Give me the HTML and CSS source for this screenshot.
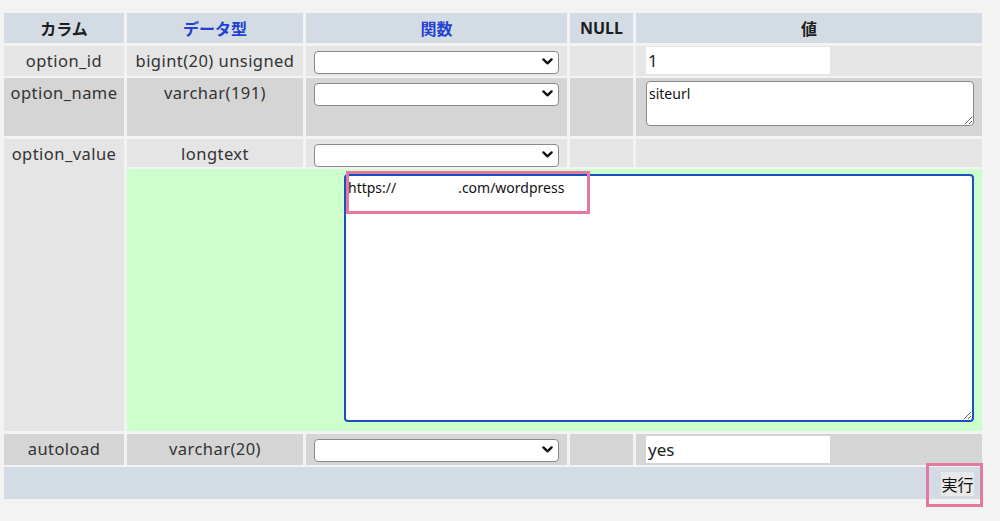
FILE: index.html
```html
<!DOCTYPE html>
<html lang="ja">
<head>
<meta charset="utf-8">
<title>編集</title>
<link rel="stylesheet" href="styles.css">
</head>
<body>
<form class="grid">
  <div class="th">カラム</div>
  <div class="th link">データ型</div>
  <div class="th link">関数</div>
  <div class="th">NULL</div>
  <div class="th">値</div>

  <div class="td odd txt">option_id</div>
  <div class="td odd txt">bigint(20) unsigned</div>
  <div class="td odd fn"><div class="sel"><select></select><svg viewBox="0 0 11 7"><path d="M1.4 1.4 L5.5 5.4 L9.6 1.4"/></svg></div></div>
  <div class="td odd"></div>
  <div class="td odd val mid"><input class="inp" type="text" value="1"></div>

  <div class="td even txt">option_name</div>
  <div class="td even txt">varchar(191)</div>
  <div class="td even fn"><div class="sel"><select></select><svg viewBox="0 0 11 7"><path d="M1.4 1.4 L5.5 5.4 L9.6 1.4"/></svg></div></div>
  <div class="td even"></div>
  <div class="td even val top"><textarea class="small">siteurl</textarea></div>

  <div class="td odd txt span2">option_value</div>
  <div class="td odd txt">longtext</div>
  <div class="td odd fn"><div class="sel"><select></select><svg viewBox="0 0 11 7"><path d="M1.4 1.4 L5.5 5.4 L9.6 1.4"/></svg></div></div>
  <div class="td odd"></div>
  <div class="td odd"></div>

  <div class="green">
    <textarea class="big">https://                 .com/wordpress</textarea>
    <div class="mark mark-url"></div>
  </div>

  <div class="td even txt">autoload</div>
  <div class="td even txt">varchar(20)</div>
  <div class="td even fn"><div class="sel"><select></select><svg viewBox="0 0 11 7"><path d="M1.4 1.4 L5.5 5.4 L9.6 1.4"/></svg></div></div>
  <div class="td even"></div>
  <div class="td even val mid"><input class="inp" type="text" value="yes"></div>

  <div class="foot">
    <button type="button" class="go">実行</button>
    <div class="mark mark-go"></div>
  </div>
</form>
</body>
</html>
```

FILE: styles.css
```css
* { box-sizing: border-box; }

html, body { overflow: visible; }

body {
  margin: 0;
  background: #f3f3f3;
  font-family: "Noto Sans", "Noto Sans CJK JP", sans-serif;
  color: #333;
}

.grid {
  display: grid;
  grid-template-columns: 120px 176px 261px 63px 346px;
  grid-template-rows: 30px 30px 58px 28px 262px 31px 32px;
  column-gap: 3px;
  row-gap: 2.5px;
  margin: 13px 0 0 4px;
  padding-bottom: 12px;
  width: 978px;
}

.th {
  background: #d3dce4;
  display: flex;
  align-items: center;
  justify-content: center;
  font-weight: bold;
  font-size: 16px;
  color: #1e1e1e;
}

.th.link { color: #2340d2; }

.td { min-width: 0; }
.odd { background: #e5e5e5; }
.even { background: #d5d5d5; }

.txt {
  text-align: center;
  font-size: 16.5px;
  letter-spacing: 0.45px;
  line-height: 29px;
  white-space: nowrap;
}

.span2 { grid-row: span 2; }

.fn { padding: 4px 0 0 8px; }

.sel {
  position: relative;
  width: 245px;
  height: 23px;
}

.sel select {
  appearance: none;
  -webkit-appearance: none;
  width: 100%;
  height: 100%;
  background: #fff;
  border: 1px solid #8a8a8a;
  border-radius: 4px;
  margin: 0;
}

.sel svg {
  position: absolute;
  right: 6px;
  top: 8px;
  width: 11px;
  height: 7px;
  fill: none;
  stroke: #111;
  stroke-width: 2.3;
  stroke-linecap: round;
  stroke-linejoin: round;
  pointer-events: none;
}

.val { padding-left: 10px; display: flex; }
.val.mid { align-items: center; }
.val.top { align-items: flex-start; padding-top: 3px; }

.inp {
  width: 184px;
  height: 27px;
  border: none;
  background: #fff;
  padding: 0 2px;
  margin: 0;
  font-family: "Noto Sans", "Noto Sans CJK JP", sans-serif;
  font-size: 17px;
  color: #222;
  outline: none;
}

textarea {
  font-family: "Noto Sans", "Noto Sans CJK JP", sans-serif;
  font-size: 14px;
  color: #111;
  margin: 0;
  background: #fff;
  outline: none;
}

.small {
  width: 328px;
  height: 45px;
  border: 1px solid #8a8a8a;
  border-radius: 4px;
  padding: 2px 2px;
}

.green {
  grid-column: 2 / 6;
  background: #ccffcc;
  position: relative;
  display: flex;
  justify-content: flex-end;
  align-items: flex-start;
  padding: 5px 8px 0 0;
}

.big {
  width: 630px;
  height: 248px;
  border: 2px solid #1d4fc4;
  border-radius: 4px;
  padding: 2px 2px;
}

.foot {
  grid-column: 1 / 6;
  background: #d3dce4;
  position: relative;
  display: flex;
  justify-content: flex-end;
  align-items: flex-start;
  padding: 5px 8px 0 0;
}

.go {
  width: 33px;
  height: 24px;
  padding: 0;
  border: none;
  background: #e9e9e9;
  font-family: "Noto Sans CJK JP", sans-serif;
  font-size: 16px;
  color: #111;
}

.mark {
  position: absolute;
  border: 3px solid #e4789f;
  pointer-events: none;
}

.mark-url {
  left: 219px;
  top: 2px;
  width: 244px;
  height: 43px;
}

.mark-go {
  right: -1px;
  top: -4px;
  bottom: -8px;
  width: 57px;
  z-index: 2;
}
```
